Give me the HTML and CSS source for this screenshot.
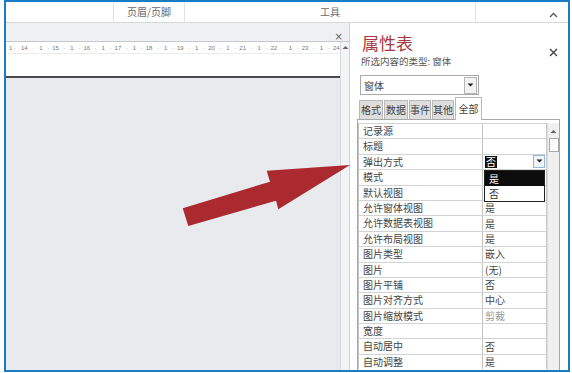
FILE: index.html
```html
<!DOCTYPE html>
<html>
<head>
<meta charset="utf-8">
<link rel="stylesheet" href="styles.css">
</head>
<body>
<div class="frame">
  <div class="topbar">
    <div class="tb-blank"></div>
    <div class="tb-group tb-hf">页眉/页脚</div>
    <div class="tb-group tb-tools">工具</div>
    <div class="tb-end">
      <svg class="chev" width="9" height="6" viewBox="0 0 9 6"><path d="M1 5 L4.5 1.5 L8 5" fill="none" stroke="#555" stroke-width="1.3"/></svg>
    </div>
  </div>
  <div class="main">
    <div class="doc">
      <div class="doc-tabbar"><span class="doc-x">×</span></div>
      <div class="doc-body">
        <div class="doc-content">
          <div class="ruler">
            <span class="r-lead">1 ·</span>
            <span class="r-u"><span>14</span><span>·</span><span>1</span><span>·</span></span>
            <span class="r-u"><span>15</span><span>·</span><span>1</span><span>·</span></span>
            <span class="r-u"><span>16</span><span>·</span><span>1</span><span>·</span></span>
            <span class="r-u"><span>17</span><span>·</span><span>1</span><span>·</span></span>
            <span class="r-u"><span>18</span><span>·</span><span>1</span><span>·</span></span>
            <span class="r-u"><span>19</span><span>·</span><span>1</span><span>·</span></span>
            <span class="r-u"><span>20</span><span>·</span><span>1</span><span>·</span></span>
            <span class="r-u"><span>21</span><span>·</span><span>1</span><span>·</span></span>
            <span class="r-u"><span>22</span><span>·</span><span>1</span><span>·</span></span>
            <span class="r-u"><span>23</span><span>·</span><span>1</span><span>·</span></span>
            <span class="r-last">24</span>
          </div>
          <div class="doc-white"></div>
          <div class="doc-line"></div>
          <div class="doc-gray"></div>
        </div>
        <div class="doc-scroll">
          <svg class="up" width="7" height="5" viewBox="0 0 7 5"><path d="M0.5 4 L3.5 1 L6.5 4 Z" fill="#666"/></svg>
        </div>
      </div>
    </div>
    <div class="sheet">
      <div class="sheet-x">
        <svg width="9" height="9" viewBox="0 0 9 9"><path d="M1 1 L8 8 M8 1 L1 8" stroke="#444" stroke-width="1.4"/></svg>
      </div>
      <div class="title">属性表</div>
      <div class="subtitle">所选内容的类型: 窗体</div>
      <div class="combo">
        <span class="combo-text">窗体</span>
        <span class="combo-btn"><svg width="7" height="4" viewBox="0 0 7 4"><path d="M0.5 0.5 L6.5 0.5 L3.5 3.5 Z" fill="#222"/></svg></span>
      </div>
      <div class="tabs">
        <div class="tab w24">格式</div>
        <div class="tab w24">数据</div>
        <div class="tab w23">事件</div>
        <div class="tab w23">其他</div>
        <div class="tab active">全部</div>
      </div>
      <div class="grid">
        <div class="table">
          <div class="row"><div class="k">记录源</div><div class="v"></div></div>
          <div class="row"><div class="k">标题</div><div class="v"></div></div>
          <div class="row"><div class="k">弹出方式</div><div class="v"><span class="sel">否</span><span class="drop-btn"><svg width="7" height="4" viewBox="0 0 7 4"><path d="M0.5 0.5 L6.5 0.5 L3.5 3.5 Z" fill="#222"/></svg></span></div></div>
          <div class="row"><div class="k">模式</div><div class="v"></div></div>
          <div class="row"><div class="k">默认视图</div><div class="v"></div></div>
          <div class="row"><div class="k">允许窗体视图</div><div class="v">是</div></div>
          <div class="row"><div class="k">允许数据表视图</div><div class="v">是</div></div>
          <div class="row"><div class="k">允许布局视图</div><div class="v">是</div></div>
          <div class="row"><div class="k">图片类型</div><div class="v">嵌入</div></div>
          <div class="row"><div class="k">图片</div><div class="v">(无)</div></div>
          <div class="row"><div class="k">图片平铺</div><div class="v">否</div></div>
          <div class="row"><div class="k">图片对齐方式</div><div class="v">中心</div></div>
          <div class="row"><div class="k">图片缩放模式</div><div class="v faint">剪裁</div></div>
          <div class="row"><div class="k">宽度</div><div class="v faint"></div></div>
          <div class="row"><div class="k">自动居中</div><div class="v">否</div></div>
          <div class="row"><div class="k">自动调整</div><div class="v">是</div></div>
          <div class="popup">
            <div class="opt on">是</div>
            <div class="opt">否</div>
          </div>
        </div>
        <div class="vscroll">
          <svg class="up2" width="7" height="5" viewBox="0 0 7 5"><path d="M0.5 4 L3.5 1 L6.5 4 Z" fill="#666"/></svg>
          <div class="thumb"></div>
        </div>
      </div>
    </div>
  </div>
</div>
<svg class="arrow" width="572" height="373" viewBox="0 0 572 373">
  <polygon points="182.7,208.3 270,181.7 266.7,170.7 350,165 278.3,209.3 276,200.7 188.3,226" fill="#ab2a30"/>
</svg>
</body>
</html>
```

FILE: styles.css
```css
html, body {
  margin: 0;
  padding: 0;
  background: #ffffff;
}
body {
  width: 572px;
  height: 373px;
  overflow: hidden;
  position: relative;
  font-family: "Noto Sans CJK SC", "Liberation Sans", sans-serif;
  color: #444;
}
.frame {
  width: 566px;
  height: 372px;
  margin-left: 4px;
  border: 2px solid #1a7cc2;
  box-sizing: border-box;
  display: flex;
  flex-direction: column;
  overflow: hidden;
  background: #fff;
}
.topbar {
  height: 20px;
  flex: none;
  display: flex;
  border-bottom: 1px solid #d8d8d8;
  font-size: 10px;
  color: #6a6a6a;
  line-height: 20px;
}
.tb-blank { width: 107px; }
.tb-group {
  text-align: center;
  border-left: 1px solid #e2e2e2;
}
.tb-hf { width: 70px; }
.tb-tools { width: 290px; border-right: 1px solid #e2e2e2; }
.tb-end {
  flex: 1;
  display: flex;
  justify-content: flex-end;
  align-items: center;
  padding-right: 10px;
  padding-top: 6px;
}
.main {
  flex: 1;
  display: flex;
  min-height: 0;
}
.doc {
  width: 344px;
  display: flex;
  flex-direction: column;
  border-right: 1px solid #cfd2d6;
}
.doc-tabbar {
  height: 18px;
  flex: none;
  background: #eef0f2;
  border-bottom: 1px solid #c4c7cb;
  display: flex;
  justify-content: flex-end;
  align-items: flex-end;
  padding-right: 6px;
}
.doc-x {
  font-family: "DejaVu Sans", sans-serif;
  font-size: 10px;
  line-height: 10px;
  margin-bottom: -1px;
  color: #666;
}
.doc-body {
  flex: 1;
  display: flex;
}
.doc-content {
  flex: 1;
  display: flex;
  flex-direction: column;
}
.ruler {
  height: 11px;
  display: flex;
  align-items: center;
  padding-left: 3px;
  font-family: "Liberation Sans", sans-serif;
  font-size: 6px;
  color: #777;
  background: #fff;
  white-space: nowrap;
}
.r-lead { width: 12px; }
.r-u {
  width: 31.2px;
  display: flex;
  justify-content: space-between;
  padding-right: 3px;
  box-sizing: border-box;
}
.doc-white {
  height: 22px;
  background: #fff;
  border-top: 1px solid #ececec;
}
.doc-line {
  height: 2px;
  background: #4a4a4a;
}
.doc-gray {
  flex: 1;
  background: #e8eaee;
}
.doc-scroll {
  width: 9px;
  background: #f3f4f5;
  border-left: 1px solid #d6d8db;
  display: flex;
  justify-content: center;
  padding-top: 3px;
  box-sizing: border-box;
}
.up { display: block; }
.sheet {
  flex: 1;
  position: relative;
  background: #fff;
  padding-left: 7px;
  padding-right: 8px;
  display: flex;
  flex-direction: column;
}
.sheet-x {
  position: absolute;
  left: 199px;
  top: 15px;
}
.title {
  margin-top: 9px;
  margin-left: 5px;
  font-size: 17px;
  line-height: 22px;
  color: #a8383f;
}
.subtitle {
  margin-top: 1px;
  margin-left: 4px;
  font-size: 9.5px;
  line-height: 12px;
  color: #555;
}
.combo {
  margin-top: 8px;
  margin-left: 3px;
  width: 119px;
  height: 20px;
  box-sizing: border-box;
  border: 1px solid #a9a9a9;
  display: flex;
  align-items: center;
  justify-content: space-between;
  padding-left: 3px;
  padding-right: 1px;
  font-size: 10px;
}
.combo-btn {
  width: 11px;
  height: 15px;
  border: 1px solid #b5b5b5;
  background: #f2f2f2;
  display: flex;
  align-items: center;
  justify-content: center;
}
.tabs {
  margin-top: 1px;
  margin-left: 2px;
  height: 23px;
  display: flex;
  align-items: flex-end;
}
.tab {
  height: 19px;
  box-sizing: border-box;
  border: 1px solid #b9b9b9;
  border-bottom: none;
  background: #dedede;
  font-size: 10px;
  line-height: 18px;
  text-align: center;
  color: #444;
  margin-right: 1px;
}
.w24 { width: 24px; }
.w23 { width: 22px; }
.tab.active {
  height: 23px;
  width: 27px;
  background: #fff;
  line-height: 22px;
  margin-bottom: -1px;
  position: relative;
  z-index: 1;
}
.grid {
  width: 203px;
  flex: 1;
  box-sizing: border-box;
  border: 1px solid #a7a7a7;
  border-bottom: none;
  display: flex;
  padding-top: 3px;
}
.table {
  width: 188px;
  position: relative;
  border-right: 1px solid #c9c9c9;
  align-self: flex-start;
}
.row {
  height: 15.4px;
  box-sizing: border-box;
  border-top: 1px solid #d3d3d3;
  display: flex;
  font-size: 10px;
  line-height: 14px;
  color: #444;
}
.k {
  width: 125px;
  padding-left: 4px;
  box-sizing: border-box;
  border-right: 1px solid #c4c4c4;
  border-left: 1px solid #c4c4c4;
}
.v {
  flex: 1;
  padding-left: 2px;
  display: flex;
  align-items: center;
  position: relative;
}
.faint { color: #999; }
.sel {
  background: #111;
  color: #fff;
  line-height: 12px;
  padding: 0 1px;
}
.drop-btn {
  position: absolute;
  right: 1px;
  top: 0;
  width: 12px;
  height: 13px;
  box-sizing: border-box;
  border: 1px solid #8fb8d8;
  background: #eef5fb;
  display: flex;
  align-items: center;
  justify-content: center;
}
.popup {
  position: absolute;
  left: 126px;
  top: 47px;
  width: 61px;
  border: 1px solid #222;
  background: #fff;
  box-sizing: border-box;
  z-index: 2;
}
.opt {
  height: 15px;
  font-size: 10px;
  line-height: 15px;
  padding-left: 4px;
  color: #333;
}
.opt.on {
  background: #0c0c0c;
  color: #fff;
}
.vscroll {
  flex: 1;
  background: #f0f0f0;
  border-left: 1px solid #dcdcdc;
  display: flex;
  flex-direction: column;
  align-items: center;
  padding-top: 6px;
}
.up2 { display: block; }
.thumb {
  margin-top: 4px;
  width: 10px;
  height: 14px;
  box-sizing: border-box;
  border: 1px solid #a8a8a8;
  background: #fbfbfb;
}
.arrow {
  position: absolute;
  left: 0;
  top: 0;
  pointer-events: none;
}
```
